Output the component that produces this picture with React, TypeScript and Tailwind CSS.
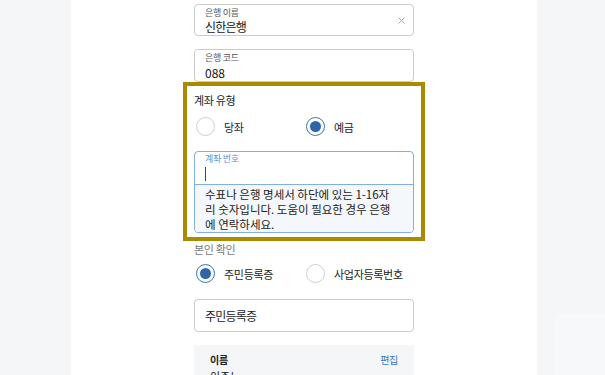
import React from "react";

const font = { fontFamily: '"Noto Sans CJK KR", "Noto Sans", sans-serif' };

const Radio = ({ checked, label }: { checked?: boolean; label: string }) => (
  <label className="flex items-center gap-[9px]">
    <span
      className={
        checked
          ? "flex h-[19px] w-[19px] shrink-0 items-center justify-center rounded-full border border-[#3a74b8] bg-white"
          : "flex h-[19px] w-[19px] shrink-0 items-center justify-center rounded-full border border-[#cfcfcf] bg-white"
      }
    >
      {checked && <span className="h-[11px] w-[11px] rounded-full bg-[#2f66ab]" />}
    </span>
    <span className="whitespace-nowrap text-[11px] leading-[16px] tracking-[-0.3px] text-[#222]">{label}</span>
  </label>
);

const App = () => {
  return (
    <div className="flex h-[375px] w-[605px] overflow-hidden bg-[#f5f6f8]" style={font}>
      <div className="w-[71px] shrink-0" />
      <main className="flex w-[466px] shrink-0 flex-col items-center bg-white pt-[4px]">
        <div className="flex w-[220px] flex-col">
          {/* 은행 이름 */}
          <div className="relative h-[32px] rounded-[4px] border border-[#cbcbcb] px-[10px]">
            <div className="pt-[2px] text-[9px] leading-[12px] tracking-[-0.3px] text-[#555]">은행 이름</div>
            <div className="text-[12px] leading-[16px] tracking-[-0.8px] text-[#111]">신한은행</div>
            <svg className="absolute right-[8px] top-[12px]" width="7" height="7" viewBox="0 0 7 7">
              <path d="M0.5 0.5 L6.5 6.5 M6.5 0.5 L0.5 6.5" stroke="#a0a0a0" strokeWidth="0.9" />
            </svg>
          </div>

          {/* 은행 코드 */}
          <div className="mt-[13px] h-[33px] rounded-[4px] border border-[#cbcbcb] px-[10px]">
            <div className="pt-[2px] text-[9px] leading-[12px] tracking-[-0.3px] text-[#555]">은행 코드</div>
            <div className="pt-[1px] text-[12px] leading-[16px] text-[#111]">088</div>
          </div>

          {/* highlighted: 계좌 유형 */}
          <section className="mx-[-11px] border-[4px] border-[#a98b00] px-[7px] pb-[4px] pt-[6px]">
            <h3 className="text-[11px] leading-[16px] tracking-[-0.3px] text-[#222]">계좌 유형</h3>
            <div className="mt-[9px] flex">
              <div className="w-[112px] pl-[2px]">
                <Radio label="당좌" />
              </div>
              <Radio checked label="예금" />
            </div>
            <div className="mt-[15px] overflow-hidden rounded-[4px] border border-[#7fb0e0]">
              <div className="h-[32px] px-[10px] pt-[1px]">
                <div className="text-[9px] leading-[12px] tracking-[-0.3px] text-[#5b93cf]">계좌 번호</div>
                <div className="mt-[2px] h-[14px] w-[1px] bg-[#444]" />
              </div>
              <p className="whitespace-nowrap border-t border-[#7fb0e0] bg-[#f4f8fc] px-[10px] pb-0 pt-[2px] text-[11.5px] leading-[15px] text-[#222]">
                수표나 은행 명세서 하단에 있는 1-16자
                <br />
                리 숫자입니다. 도움이 필요한 경우 은행
                <br />
                에 연락하세요.
              </p>
            </div>
          </section>

          {/* 본인 확인 */}
          <h3 className="text-[11px] leading-[16px] tracking-[-0.3px] text-[#777]">본인 확인</h3>
          <div className="mt-[7px] flex">
            <div className="w-[112px] pl-[2px]">
              <Radio checked label="주민등록증" />
            </div>
            <Radio label="사업자등록번호" />
          </div>
          <div className="mt-[16px] flex h-[33px] items-center rounded-[4px] border border-[#cbcbcb] px-[10px] text-[12px] tracking-[-0.8px] text-[#222]">
            주민등록증
          </div>

          <div className="mt-[13px] h-[40px] bg-[#f5f6f8] px-[16px] pt-[8px]">
            <div className="flex items-center justify-between text-[10px] leading-[14px] tracking-[-0.3px]">
              <span className="font-bold text-[#222]">이름</span>
              <span className="text-[#3a74b8]">편집</span>
            </div>
            <div className="mt-[1px] text-[11px] leading-[16px] text-[#222]">이주노</div>
          </div>
        </div>
      </main>
      <aside className="flex flex-1 flex-col pl-[18px] pt-[314px]">
        <div className="flex-1 bg-[#f7f8f9]" />
      </aside>
    </div>
  );
};

export default App;
